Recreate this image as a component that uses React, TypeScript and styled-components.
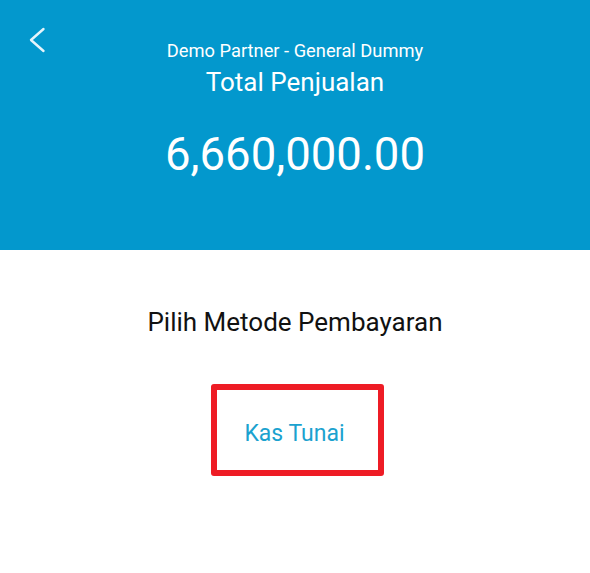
import React from "react";
import styled, { createGlobalStyle } from "styled-components";

const Global = createGlobalStyle`
  html, body { margin: 0; padding: 0; background: #ffffff; }
  body { font-family: Roboto, "Noto Sans", sans-serif; }
`;

const Page = styled.div`
  width: 590px;
  height: 573px;
  display: flex;
  flex-direction: column;
  background: #ffffff;
`;

const Header = styled.header`
  position: relative;
  height: 250px;
  background: #0398cd;
  display: flex;
  flex-direction: column;
  align-items: center;
  color: #ffffff;
`;

const BackButton = styled.button`
  position: absolute;
  left: 28px;
  top: 27px;
  width: 18px;
  height: 26px;
  padding: 0;
  border: none;
  background: transparent;
  display: flex;
  align-items: center;
  justify-content: center;
`;

const Partner = styled.div`
  margin-top: 40px;
  font-size: 18.3px;
  line-height: 22px;
`;

const Title = styled.div`
  margin-top: 5px;
  font-size: 26px;
  line-height: 30px;
`;

const Amount = styled.div`
  margin-top: 32px;
  font-size: 45.5px;
  line-height: 52px;
`;

const Body = styled.main`
  display: flex;
  flex-direction: column;
  align-items: center;
`;

const Prompt = styled.div`
  margin-top: 57px;
  font-size: 26px;
  line-height: 30px;
  color: #111111;
`;

const Method = styled.button`
  margin-top: 47px;
  margin-left: 5px;
  width: 173px;
  height: 92px;
  box-sizing: border-box;
  border: 6px solid #ee1c25;
  border-radius: 3px;
  background: #ffffff;
  font-family: Roboto, "Noto Sans", sans-serif;
  font-size: 23px;
  color: #1ba2cf;
  display: flex;
  align-items: center;
  justify-content: center;
  padding: 6px 6px 0 0;
`;

export default function App() {
  return (
    <>
      <Global />
      <Page>
        <Header>
          <BackButton aria-label="Kembali">
            <svg width="18" height="26" viewBox="0 0 18 26">
              <path d="M15.5 2 L3 13 L15.5 24" fill="none" stroke="#e6f4fb" strokeWidth="2.4" strokeLinecap="round" strokeLinejoin="round" />
            </svg>
          </BackButton>
          <Partner>Demo Partner - General Dummy</Partner>
          <Title>Total Penjualan</Title>
          <Amount>6,660,000.00</Amount>
        </Header>
        <Body>
          <Prompt>Pilih Metode Pembayaran</Prompt>
          <Method>Kas Tunai</Method>
        </Body>
      </Page>
    </>
  );
}
